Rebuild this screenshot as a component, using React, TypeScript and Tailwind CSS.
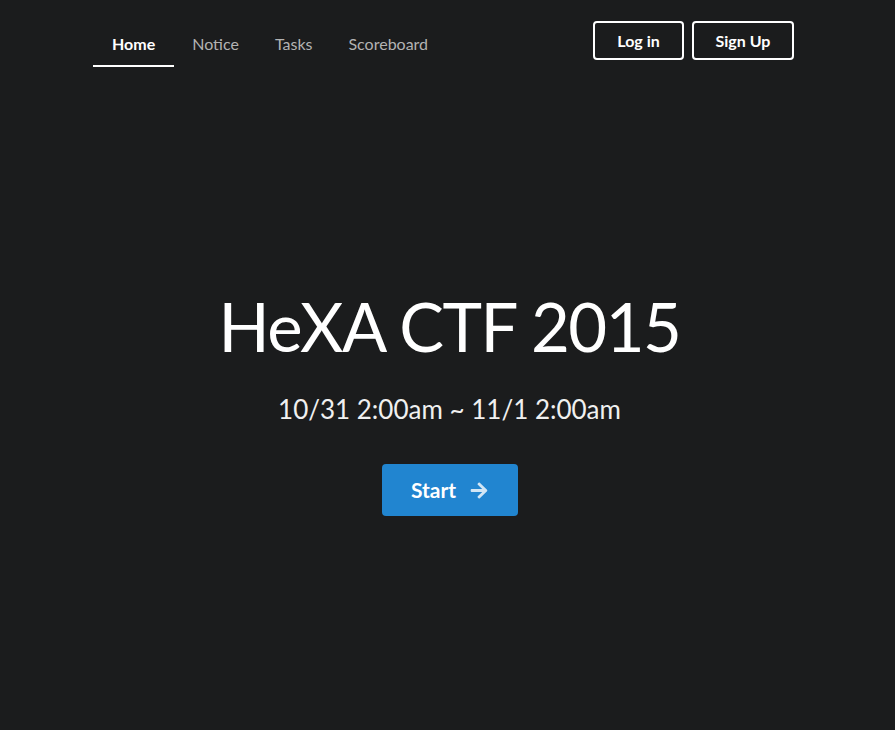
export default function App() {
  const tabs = ["Home", "Notice", "Tasks", "Scoreboard"];
  return (
    <div
      className="min-h-[730px] bg-[#1b1c1d] text-white"
      style={{ fontFamily: "Lato, 'Open Sans', sans-serif" }}
    >
      <div className="flex items-start justify-between pl-[93px] pr-[101px] pt-[21px]">
        <nav className="flex">
          {tabs.map((t, i) => (
            <a
              key={t}
              className={
                i === 0
                  ? "px-[19px] pt-[13px] pb-[11px] text-[16px] font-bold border-b-2 border-white leading-[20px]"
                  : "px-[18px] pt-[13px] pb-[11px] text-[16px] text-[#b3b3b3] border-b-2 border-transparent leading-[20px]"
              }
            >
              {t}
            </a>
          ))}
        </nav>
        <div className="flex gap-2">
          <button className="h-[39px] w-[91px] rounded border-2 border-white text-[16px] font-bold">
            Log in
          </button>
          <button className="h-[39px] w-[102px] rounded border-2 border-white text-[16px] font-bold">
            Sign Up
          </button>
        </div>
      </div>

      <div className="flex flex-col items-center pl-[4px] pt-[219px]">
        <h1 className="text-[67px] leading-[80px] font-normal tracking-[-1.5px]">HeXA CTF 2015</h1>
        <p className="mt-[27px] text-[26px] leading-[32px] text-[#f0f0f0]">
          10/31 2:00am ~ 11/1 2:00am
        </p>
        <button className="mt-[39px] flex h-[52px] w-[136px] items-center justify-center gap-[14px] rounded bg-[#2185d0] text-[21px] font-bold">
          <span>Start</span>
          <svg viewBox="0 0 448 512" className="h-[19px] w-[18px] fill-white opacity-80">
            <path d="M190.5 66.9l22.2-22.2c9.4-9.4 24.6-9.4 33.9 0L441 239c9.4 9.4 9.4 24.6 0 33.9L246.6 467.3c-9.4 9.4-24.6 9.4-33.9 0l-22.2-22.2c-9.5-9.5-9.3-25 .4-34.3L311.4 296H24c-13.3 0-24-10.7-24-24v-32c0-13.3 10.7-24 24-24h287.4L190.9 101.2c-9.8-9.3-10-24.8-.4-34.3z" />
          </svg>
        </button>
      </div>
    </div>
  );
}
